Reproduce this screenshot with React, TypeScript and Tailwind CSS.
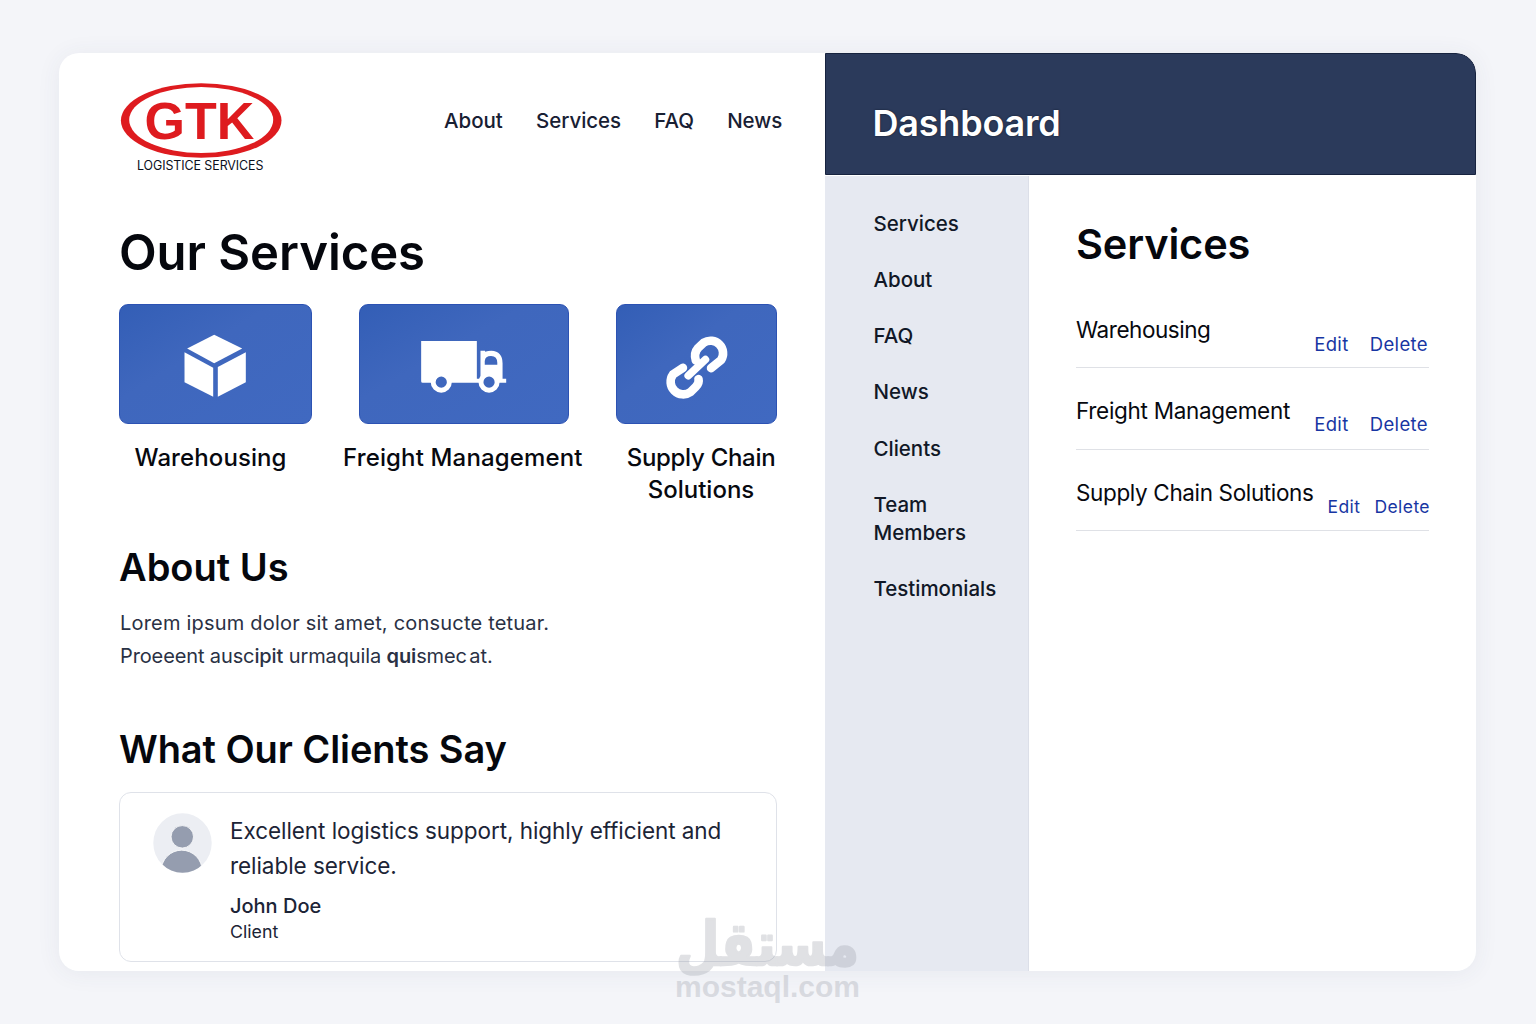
import React from 'react';

const navLinks = ['About', 'Services', 'FAQ', 'News'];

const sidebarLinks = ['Services', 'About', 'FAQ', 'News', 'Clients', 'Team Members', 'Testimonials'];

type ServiceRow = {
  name: string;
  row: string;
  title: string;
  actions: string;
};

const serviceRows: ServiceRow[] = [
  {
    name: 'Warehousing',
    row: 'h-[53px]',
    title: 'tracking-[-0.45px]',
    actions: 'mt-[14px] mr-px gap-[21px] text-[18.5px] tracking-[0.38px]',
  },
  {
    name: 'Freight Management',
    row: 'h-[82px] pt-7',
    title: 'tracking-[-0.3px]',
    actions: 'mt-[13px] mr-px gap-[21px] text-[18.5px] tracking-[0.38px]',
  },
  {
    name: 'Supply Chain Solutions',
    row: 'h-[81px] pt-7',
    title: 'tracking-[-0.36px]',
    actions: 'mt-[14px] -mr-px gap-[14px] text-[17.5px] tracking-[0.42px]',
  },
];

function Logo() {
  return (
    <svg className="h-[94px] w-[163px]" viewBox="0 0 163 94" role="img" aria-label="GTK Logistice Services">
      <ellipse cx="82.2" cy="38.5" rx="80.3" ry="37.3" fill="#de1b1f" />
      <ellipse cx="82.2" cy="38" rx="72" ry="33" fill="#fff" />
      <text x="25.5" y="56.5" className="font-['Liberation_Sans'] text-[52px] font-bold" fill="#de1b1f">
        GTK
      </text>
      <text x="18" y="88" className="font-['Inter'] text-[12.4px] tracking-[-0.06px]" fill="#0b0f1c">
        LOGISTICE SERVICES
      </text>
    </svg>
  );
}

function BoxIcon() {
  return (
    <svg className="h-full w-full" viewBox="27 28 578 358" fill="#fff">
      <path d="M312 118 397 160 312 205 230 160Z" />
      <path d="M222 171 309 218 309 306 222 262Z" />
      <path d="M323 216 408 171 408 262 323 306Z" />
    </svg>
  );
}

function TruckIcon() {
  return (
    <svg className="h-full w-full" viewBox="-121 29 628 358">
      <path d="M63 138H232V253H243V168H257V171Q266 168 276 168Q310 170 310 206V253H321V265H68Q63 265 63 260Z" fill="#fff" />
      <path d="M256 210V199Q257 184 275 184Q294 184 294 205V210Z" fill="#3f67bd" />
      <circle cx="124" cy="263" r="24.5" fill="#3f67bd" stroke="#fff" strokeWidth="15" />
      <circle cx="269" cy="263" r="24.5" fill="#3f67bd" stroke="#fff" strokeWidth="15" />
    </svg>
  );
}

function ChainIcon() {
  return (
    <svg className="h-full w-full" viewBox="649 29 480 355" fill="none" stroke="#fff" strokeWidth="26" strokeLinecap="round">
      <path d="M933 219 963 195A38 38 0 0 0 911 142L894 158Q880 174 887 196" />
      <path d="M848 218 818 238A38 38 0 0 0 871 291L887 275Q898 264 895 252" />
      <path d="M864 242 916 193" strokeWidth="23" />
    </svg>
  );
}

function Avatar() {
  return (
    <svg className="h-[60px] w-[59px] shrink-0" viewBox="0 0 59 60">
      <defs>
        <clipPath id="avatar">
          <ellipse cx="29.5" cy="30" rx="29.2" ry="29.8" />
        </clipPath>
      </defs>
      <g clipPath="url(#avatar)">
        <rect width="59" height="60" fill="#eceef3" />
        <circle cx="29.3" cy="23.8" r="11.2" fill="#959daf" stroke="#fff" strokeWidth="0.8" />
        <ellipse cx="28.7" cy="58" rx="20.5" ry="20.8" fill="#959daf" stroke="#fff" strokeWidth="0.8" />
      </g>
    </svg>
  );
}

function Watermark() {
  return (
    <svg className="absolute left-[670px] top-[910px] h-[100px] w-[200px] opacity-30" viewBox="0 0 200 100" fill="#9a9da7">
      <text
        x="97.5"
        y="46"
        textAnchor="middle"
        transform="scale(1 1.2)"
        className="font-['DejaVu_Sans'] text-[50px] font-bold"
        stroke="#9a9da7"
        strokeWidth="2"
        strokeLinejoin="round"
      >
        مستقل
      </text>
      <text x="5" y="87" className="font-['Liberation_Sans'] text-[30px] font-bold">
        mostaql.com
      </text>
    </svg>
  );
}

export default function App() {
  const card = 'h-[120px] overflow-hidden rounded-[9px] border border-[#2c52b3] bg-linear-to-br from-[#335eb6] via-[#3f67bd] via-40% to-[#4069c1]';
  const label = 'mt-[18px] text-2xl leading-8 font-medium text-[#07090f]';

  return (
    <div className="relative h-screen w-full overflow-hidden bg-[#f4f5f9] px-[59px] pt-[53px] font-['Inter',sans-serif]">
      <div className="flex h-[918px] w-[1417px] overflow-hidden rounded-[20px] bg-white shadow-[0_2px_24px_rgba(60,70,100,0.07)]">
        {/* Public site */}
        <main className="w-[766px] shrink-0 pl-[60px]">
          <header className="flex h-[147px] pt-[29px]">
            <Logo />
            <nav className="mt-[25px] ml-[162px] flex h-7 gap-[33.2px] text-[20.5px] leading-7 font-medium tracking-[-0.03px] text-[#182033]">
              {navLinks.map((link) => (
                <a key={link}>{link}</a>
              ))}
            </nav>
          </header>

          <h1 className="mt-[23px] text-[49px] leading-[60px] font-semibold tracking-[-0.05px] text-[#05070d]">Our Services</h1>

          <section className="mt-[21px] flex h-[198px] gap-[47px]">
            <div className="w-[193px]">
              <div className={card}><BoxIcon /></div>
              <p className={`${label} pl-[15.5px] tracking-[0.1px]`}>Warehousing</p>
            </div>
            <div className="w-[210px]">
              <div className={card}><TruckIcon /></div>
              <p className={`${label} -ml-[16px] tracking-[0.15px] whitespace-nowrap`}>Freight Management</p>
            </div>
            <div className="w-[161px]">
              <div className={card}><ChainIcon /></div>
              <p className={`${label} pl-[9px] text-center`}>
                <span className="tracking-[-0.3px]">Supply Chain</span>
                <br />
                Solutions
              </p>
            </div>
          </section>

          <h2 className="mt-[41px] text-[38px] leading-[48px] font-semibold text-[#05070d]">About Us</h2>
          <p className="mt-4 pl-px text-[20px] leading-[33px] text-[#2a3144]">
            <span className="tracking-[0.2px]">Lorem ipsum dolor sit amet, consucte tetuar.</span>
            <br />
            <span className="tracking-[-0.12px]">
              Proeeent ausc<span className="font-medium">ipit</span> urmaquila{' '}
              <span className="font-semibold">qui</span>smec<span className="-ml-[3px]"> at.</span>
            </span>
          </p>

          <h2 className="mt-[52px] text-[38px] leading-[48px] font-semibold tracking-[-0.08px] text-[#05070d]">What Our Clients Say</h2>

          <section className="mt-[19px] flex h-[170px] w-[658px] rounded-xl border border-[#dfe2e9] pt-5 pl-[33px]">
            <Avatar />
            <div className="ml-[18px] text-[#1c2436]">
              <p className="text-[22.5px] leading-[35px] tracking-[-0.06px] whitespace-nowrap">
                Excellent logistics support, highly efficient and
                <br />
                reliable service.
              </p>
              <p className="mt-[9px] text-xl leading-7 font-medium">John Doe</p>
              <p className="text-[17.8px] leading-6">Client</p>
            </div>
          </section>
        </main>

        {/* Admin dashboard */}
        <div className="flex flex-1 flex-col">
          <header className="h-[122px] shrink-0 rounded-tr-[20px] border border-[#17233f] bg-[#2b3a5b] pt-[45px] pl-[46.5px]">
            <h1 className="text-4xl leading-[48px] font-semibold tracking-[-0.2px] text-white text-shadow-[0_0_2px_#111827]">Dashboard</h1>
          </header>
          <div className="flex flex-1 pt-px">
            <aside className="flex w-[204px] shrink-0 flex-col gap-[28.15px] border-r border-[#dcdfe8] bg-[#e6e9f1] pt-[34px] pr-5 pl-[48.5px] text-[20.5px] leading-7 font-medium tracking-[-0.02px] text-[#111827]">
              {sidebarLinks.map((link) => (
                <a key={link}>{link}</a>
              ))}
            </aside>
            <section className="flex-1 pt-10 pl-[47px]">
              <h2 className="text-[41.5px] leading-[56px] font-semibold tracking-[-0.15px] text-[#05070d]">Services</h2>
              <div className="mt-[43px] w-[353px]">
                {serviceRows.map((service) => (
                  <div key={service.name} className={`flex justify-between border-b border-[#dfe1e6] ${service.row}`}>
                    <h3 className={`text-[22.5px] leading-[30px] whitespace-nowrap text-[#07090f] ${service.title}`}>
                      {service.name}
                    </h3>
                    <div className={`flex leading-[30px] text-[#1836a3] ${service.actions}`}>
                      <a>Edit</a>
                      <a>Delete</a>
                    </div>
                  </div>
                ))}
              </div>
            </section>
          </div>
        </div>
      </div>
      <Watermark />
    </div>
  );
}
